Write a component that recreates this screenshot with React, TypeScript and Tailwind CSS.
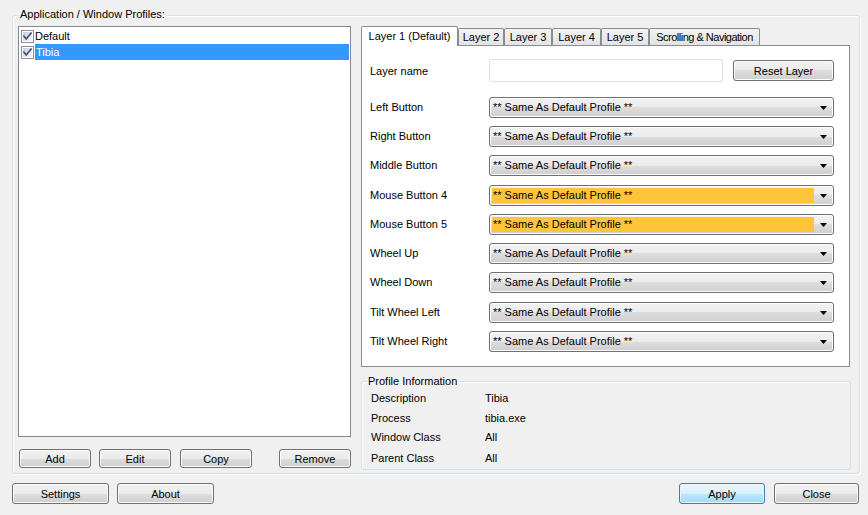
import React from "react";

const rows: { label: string; highlight?: boolean; extra?: boolean }[] = [
  { label: "Left Button" },
  { label: "Right Button" },
  { label: "Middle Button" },
  { label: "Mouse Button 4", highlight: true, extra: true },
  { label: "Mouse Button 5", highlight: true },
  { label: "Wheel Up" },
  { label: "Wheel Down" },
  { label: "Tilt Wheel Left", extra: true },
  { label: "Tilt Wheel Right" },
];

const info: [string, string, string][] = [
  ["Description", "Tibia", "h-[20px]"],
  ["Process", "tibia.exe", "h-[20px]"],
  ["Window Class", "All", "h-[19px]"],
  ["Parent Class", "All", "h-[22px]"],
];

function Button({
  children,
  className = "",
  primary = false,
}: {
  children: React.ReactNode;
  className?: string;
  primary?: boolean;
}) {
  return (
    <div
      className={
        "flex items-center justify-center rounded-[3px] border pt-[1px] " +
        (primary
          ? "border-[#3c7fb1] bg-[linear-gradient(to_bottom,#eaf6fd_0%,#d9f0fc_50%,#bee6fd_50%,#a7d9f5_100%)] shadow-[inset_0_0_0_1px_#e6f4fc] "
          : "border-[#707070] bg-[linear-gradient(to_bottom,#f2f2f2_0%,#ebebeb_50%,#dddddd_50%,#cfcfcf_100%)] shadow-[inset_0_0_0_1px_#fcfcfc] ") +
        className
      }
    >
      {children}
    </div>
  );
}

function Check() {
  return (
    <svg width="13" height="13" viewBox="0 0 13 13" className="shrink-0">
      <defs>
        <linearGradient id="cbfill" x1="0" y1="0" x2="1" y2="1">
          <stop offset="0" stopColor="#cbcfd5" />
          <stop offset="1" stopColor="#f6f6f6" />
        </linearGradient>
      </defs>
      <rect x="0.5" y="0.5" width="12" height="12" fill="#fff" stroke="#8e8f8f" />
      <rect x="2" y="2" width="9" height="9" fill="url(#cbfill)" />
      <path
        d="M3 6.2 L5.2 9 L10 3.2"
        fill="none"
        stroke="#3b4f86"
        strokeWidth="1.7"
        strokeLinecap="square"
      />
    </svg>
  );
}

function Combo({ highlight = false }: { highlight?: boolean }) {
  return (
    <div className="flex h-[21px] w-[345px] rounded-[3px] border border-[#707070] bg-[linear-gradient(to_bottom,#f2f2f2_0%,#ebebeb_50%,#dddddd_50%,#cfcfcf_100%)] p-[1px] shadow-[inset_0_0_0_1px_#fcfcfc]">
      <div
        className={
          "mb-[1px] ml-[1px] mr-[1px] mt-[1px] flex flex-1 items-center pl-[1px] " +
          (highlight ? "bg-[#ffc53a]" : "")
        }
      >
        ** Same As Default Profile **
      </div>
      <div className="flex w-[17px] items-center justify-center">
        <svg width="7" height="4" viewBox="0 0 7 4">
          <path d="M0 0 H7 L3.5 4 Z" fill="#000" />
        </svg>
      </div>
    </div>
  );
}

function Tab({
  children,
  w,
  active = false,
}: {
  children: React.ReactNode;
  w: string;
  active?: boolean;
}) {
  return active ? (
    <div
      className={
        "relative z-10 -mb-[1px] flex h-[20px] items-center justify-center rounded-t-[2px] border border-b-0 border-[#898c95] bg-white pb-[1px] " +
        w
      }
    >
      {children}
    </div>
  ) : (
    <div
      className={
        "flex h-[17px] items-center justify-center rounded-t-[2px] border border-b-0 border-[#898c95] bg-[linear-gradient(to_bottom,#f3f3f3,#e3e3e3)] " +
        w
      }
    >
      {children}
    </div>
  );
}

export default function App() {
  return (
    <div className="h-[515px] w-[868px] overflow-hidden bg-[#f0f0f0] font-['Liberation_Sans',Arial,sans-serif] text-[11px] leading-[13px] text-black">
      <div className="pl-[12px] pt-[15px]">
        {/* Application / Window Profiles group */}
        <div className="relative h-[459px] w-[848px] rounded-[3px] border border-[#d5dfe5] shadow-[inset_1px_1px_0_#fff,1px_1px_0_#fff]">
          <div className="absolute -top-[8px] left-[5px] bg-[#f0f0f0] px-[2px]">
            Application / Window Profiles:
          </div>
          <div className="flex pl-[5px] pt-[10px]">
            {/* profile list */}
            <div className="flex w-[333px] flex-col">
              <div className="h-[411px] border border-[#828790] bg-white pl-[2px] pt-[1px]">
                <div className="flex h-[16px] items-center">
                  <Check />
                  <div className="ml-[1px]">Default</div>
                </div>
                <div className="flex h-[16px] items-center">
                  <Check />
                  <div className="ml-[1px] mr-[1px] flex h-[16px] flex-1 items-center bg-[#3399ff] pl-[1px] text-white">
                    Tibia
                  </div>
                </div>
              </div>
              <div className="mt-[12px] flex">
                <Button className="ml-[1px] h-[19px] w-[72px]">Add</Button>
                <Button className="ml-[8px] h-[19px] w-[72px]">Edit</Button>
                <Button className="ml-[9px] h-[19px] w-[72px]">Copy</Button>
                <Button className="ml-auto h-[19px] w-[72px]">Remove</Button>
              </div>
            </div>

            {/* layer settings */}
            <div className="ml-[10px] flex w-[490px] flex-col">
              <div className="flex h-[19px] items-end">
                <Tab w="w-[97px]" active>
                  Layer 1 (Default)
                </Tab>
                <Tab w="w-[46px]">Layer 2</Tab>
                <Tab w="w-[48px]">Layer 3</Tab>
                <Tab w="w-[49px]">Layer 4</Tab>
                <Tab w="w-[48px]">Layer 5</Tab>
                <Tab w="w-[111px]">
                  <span className="tracking-[-0.5px]">Scrolling &amp; Navigation</span>
                </Tab>
              </div>
              <div className="h-[322px] w-[489px] border border-[#898c95] bg-white pl-[8px] pt-[13px]">
                <div className="flex h-[23px] items-center">
                  <div className="w-[119px] pt-[1px]">Layer name</div>
                  <div className="h-[23px] w-[234px] rounded-[2px] border border-[#dde1e6] bg-white" />
                  <Button className="ml-[10px] h-[21px] w-[101px]">Reset Layer</Button>
                </div>
                <div className="mt-[15px] flex flex-col gap-[8px]">
                  {rows.map((r) => (
                    <div
                      key={r.label}
                      className={"flex items-center " + (r.extra ? "mt-[1px]" : "")}
                    >
                      <div className="w-[119px]">{r.label}</div>
                      <Combo highlight={r.highlight} />
                    </div>
                  ))}
                </div>
              </div>

              {/* Profile Information group */}
              <div className="relative mt-[14px] h-[89px] w-[490px] rounded-[3px] border border-[#d5dfe5] shadow-[inset_1px_1px_0_#fff]">
                <div className="absolute -top-[7px] left-[5px] bg-[#f0f0f0] px-[1px]">
                  Profile Information
                </div>
                <div className="flex flex-col pl-[9px] pt-[6px]">
                  {info.map(([k, v, h]) => (
                    <div key={k} className={"flex items-center " + h}>
                      <div className="w-[114px]">{k}</div>
                      <div>{v}</div>
                    </div>
                  ))}
                </div>
              </div>
            </div>
          </div>
        </div>
      </div>

      {/* dialog buttons */}
      <div className="mt-[9px] flex pl-[12px] pr-[9px]">
        <Button className="h-[21px] w-[97px]">Settings</Button>
        <Button className="ml-[8px] h-[21px] w-[97px]">About</Button>
        <Button primary className="ml-auto h-[21px] w-[86px]">
          Apply
        </Button>
        <Button className="ml-[9px] h-[21px] w-[85px]">Close</Button>
      </div>
    </div>
  );
}
